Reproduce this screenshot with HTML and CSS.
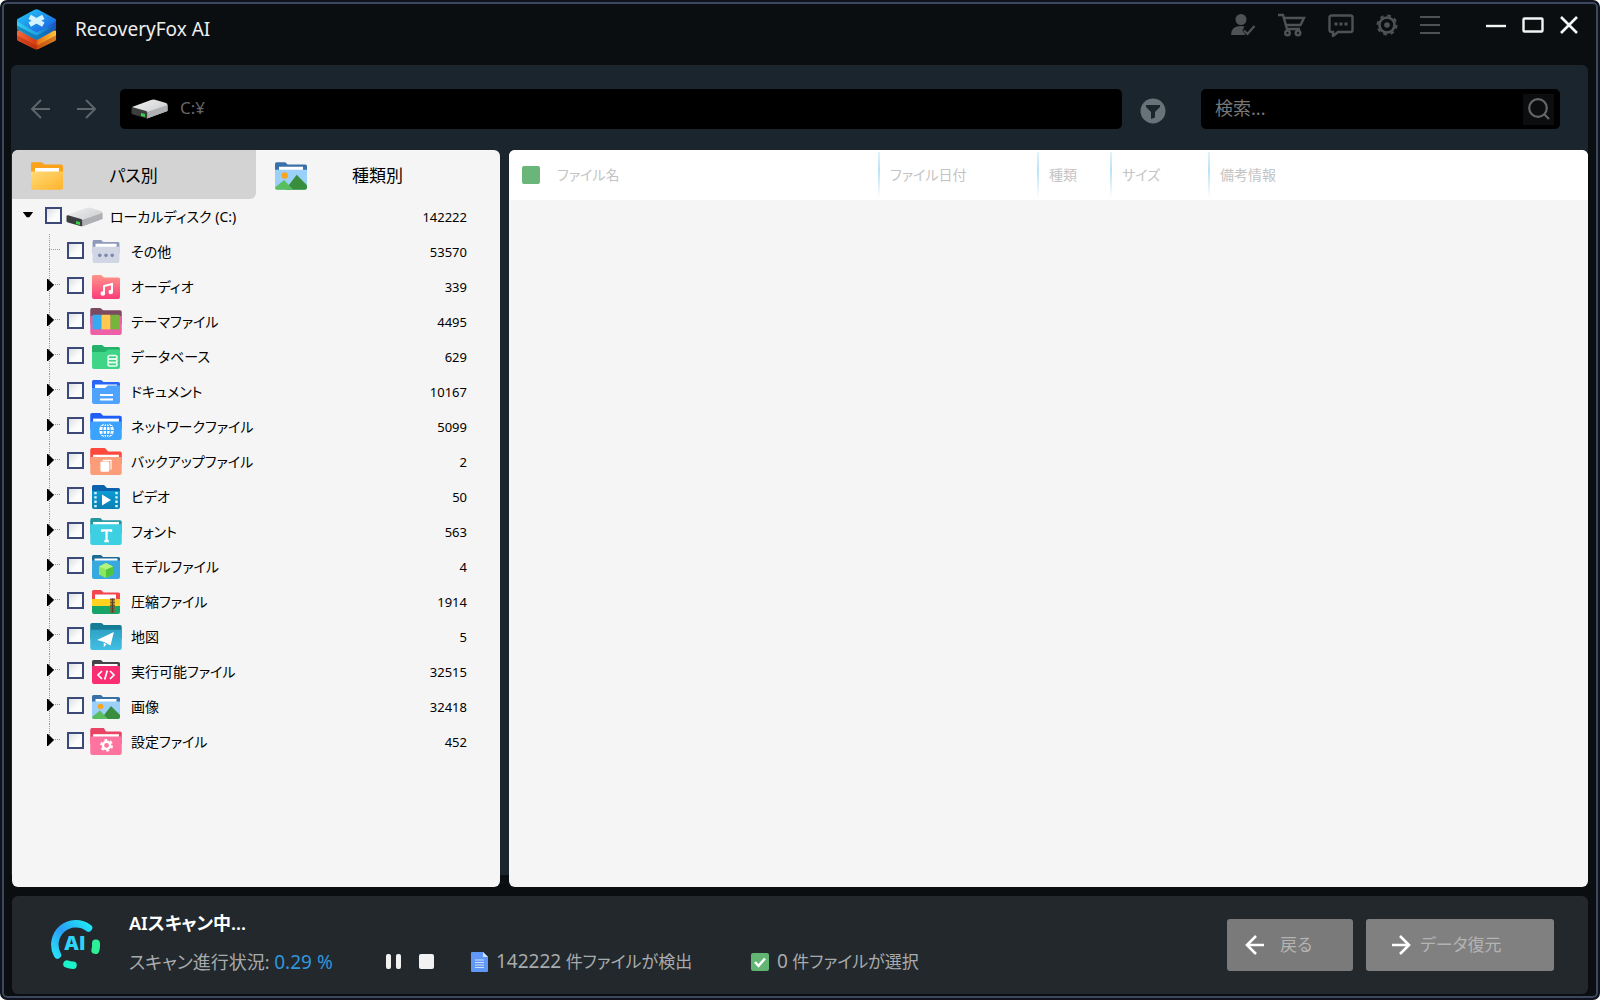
FILE: index.html
```html
<!DOCTYPE html>
<html lang="ja">
<head>
<meta charset="utf-8">
<meta name="viewport" content="width=device-width, initial-scale=1">
<title>RecoveryFox AI</title>
<link rel="stylesheet" href="styles.css">
</head>
<body>
<svg class="defs" aria-hidden="true">
  <defs>
    <linearGradient id="g-drive" x1="0" y1="0" x2="1" y2="1"><stop offset="0" stop-color="#f2f2f2"/><stop offset="1" stop-color="#c2c4c6"/></linearGradient>
    <linearGradient id="g-folder" x1="0" y1="0" x2="1" y2="1"><stop offset="0" stop-color="#ffdb78"/><stop offset="1" stop-color="#ffb32c"/></linearGradient>
    <linearGradient id="g-audio" x1="0" y1="0" x2="0" y2="1"><stop offset="0" stop-color="#ff9489"/><stop offset="1" stop-color="#fb3c7a"/></linearGradient>
    <linearGradient id="g-video" x1="0" y1="0" x2="0" y2="1"><stop offset="0" stop-color="#0c9bd6"/><stop offset="1" stop-color="#0a7fb3"/></linearGradient>
    <linearGradient id="g-map" x1="0" y1="0" x2="0" y2="1"><stop offset="0" stop-color="#2fa3c6"/><stop offset="1" stop-color="#42bfe3"/></linearGradient>
    <linearGradient id="g-blue" x1="0" y1="0" x2="1" y2="1"><stop offset="0" stop-color="#22d0f8"/><stop offset="1" stop-color="#1b55e0"/></linearGradient>
    <linearGradient id="g-side" x1="0" y1="0" x2="1" y2="0"><stop offset="0" stop-color="#35d0ee"/><stop offset=".5" stop-color="#1da4dc"/><stop offset="1" stop-color="#1c50c8"/></linearGradient>
    <linearGradient id="g-base" x1="0" y1="0" x2="1" y2="0"><stop offset="0" stop-color="#f4693c"/><stop offset=".48" stop-color="#d83c12"/><stop offset=".55" stop-color="#e87a18"/><stop offset="1" stop-color="#fcc53a"/></linearGradient>
    <linearGradient id="g-ring" x1="0" y1="1" x2="1" y2="0"><stop offset="0" stop-color="#27e0f8"/><stop offset=".5" stop-color="#2a9df8"/><stop offset="1" stop-color="#20e6f5"/></linearGradient>
  </defs>
  <symbol id="drive" viewBox="0 0 37 20">
    <path d="M1 8 20 1q2-.7 4-.3L35 4q1.500.5 1.500 2v6L16 19.500z" fill="url(#g-drive)"/>
    <path d="M16 13 36.500 6v6L16 19.500z" fill="#aeb0b3"/>
    <path d="M.5 9q.2-1 1.500-.8L15 12q1.200.4 1.200 1.700v4.800q0 1-1.200.8L2 15.500Q.5 15 .5 14z" fill="#3b3d3f"/>
    <path d="m10 14 4 1v3l-4-1z" fill="#35d24a"/>
  </symbol>
  <symbol id="folder" viewBox="0 0 28 24">
    <path d="M0 1.500Q0 0 1.500 0H9l3 2h14.500Q28 2 28 4v10H0z" fill="#f9a21a"/>
    <path d="M3.500 5h21v5h-21z" fill="#fff"/>
    <path d="M0 8h28v14q0 2-2 2H2q-2 0-2-2z" fill="url(#g-folder)"/>
  </symbol>
  <symbol id="image" viewBox="0 0 28 24">
    <path d="M0 1.500Q0 0 1.500 0H9l2 2h15.500Q28 2 28 3.500V14H0z" fill="#3a70a8"/>
    <path d="M3.500 4h21v4h-21z" fill="#fff"/>
    <path d="M0 6.500h28V22q0 2-2 2H2q-2 0-2-2z" fill="#9bd0fa"/>
    <circle cx="8.500" cy="11.500" r="2.800" fill="#faa51e"/>
    <path d="m9 24 10-13 9 9v2q0 2-2 2z" fill="#388e3c"/>
    <path d="m0 22 8-6.500 8 8.500H2q-2 0-2-2z" fill="#59be60"/>
  </symbol>
  <symbol id="other" viewBox="0 0 28 24">
    <path d="M0 1.500Q0 0 1.500 0H9l2 2h15.500Q28 2 28 3.500V14H0z" fill="#8e9ab9"/>
    <path d="M3 4h22v4H3z" fill="#fff"/>
    <path d="M0 7h28v15q0 2-2 2H2q-2 0-2-2z" fill="#d0d6e4"/>
    <g fill="#7f89ad"><circle cx="7.500" cy="16" r="1.900"/><circle cx="14" cy="16" r="1.900"/><circle cx="20.500" cy="16" r="1.900"/></g>
  </symbol>
  <symbol id="audio" viewBox="0 0 28 24">
    <path d="M0 1.500Q0 0 1.500 0H9l3 2.500h14.500Q28 2.500 28 4v18q0 2-2 2H2q-2 0-2-2z" fill="url(#g-audio)"/>
    <path d="M12 18.500V11l8-2v8" fill="none" stroke="#fff" stroke-width="2"/>
    <circle cx="10.800" cy="18.500" r="2.300" fill="#fff"/><circle cx="18.800" cy="17" r="2.300" fill="#fff"/>
  </symbol>
  <symbol id="theme" viewBox="0 0 28 24">
    <path d="M0 1.500Q0 0 1.500 0H9l2.500 2h15Q28 2 28 4v10H0z" fill="#7c4a60"/>
    <path d="M0 7h28v15q0 2-2 2H2q-2 0-2-2z" fill="#ee5fa7"/>
    <path d="M2 6h8v13H2z" fill="#36aaf0"/><path d="M10 6h8v13h-8z" fill="#ffc94f"/><path d="M18 6h8v13h-8z" fill="#76b43c"/>
  </symbol>
  <symbol id="database" viewBox="0 0 28 24">
    <path d="M0 1.500Q0 0 1.500 0H10l2.500 2h14Q28 2 28 4v10H0z" fill="#24b26b"/>
    <path d="M0 7h13l3-2.500h12V22q0 2-2 2H2q-2 0-2-2z" fill="#3fd587"/>
    <g fill="none" stroke="#e9fff3" stroke-width="1.600"><rect x="16" y="10.500" width="9" height="3.500" rx="1.700"/><rect x="16" y="14" width="9" height="3.500" rx="1.700"/><rect x="16" y="17.500" width="9" height="3.500" rx="1.700"/></g>
  </symbol>
  <symbol id="document" viewBox="0 0 28 24">
    <path d="M0 1.500Q0 0 1.500 0H9l2.500 2h15Q28 2 28 4v10H0z" fill="#2a66f6"/>
    <path d="M3 4.500h22V9H3z" fill="#fff"/>
    <path d="M0 8h13l3-2.500h12V22q0 2-2 2H2q-2 0-2-2z" fill="#4ea3ff"/>
    <path d="M8 15h13M8 19.500h13" stroke="#fff" stroke-width="1.800"/>
  </symbol>
  <symbol id="network" viewBox="0 0 28 24">
    <path d="M0 1.500Q0 0 1.500 0H9l2.500 2.500h15Q28 2.500 28 4v10H0z" fill="#1f5df4"/>
    <path d="M2.500 5h23v4h-23z" fill="#fff"/>
    <path d="M0 7.500h28V22q0 2-2 2H2q-2 0-2-2z" fill="#3ba3fd"/>
    <circle cx="14.500" cy="15.500" r="6.500" fill="#fff"/>
    <path d="M8 15.500h13M14.500 9v13M9.500 12h10M9.500 19h10" stroke="#3ba3fd"/>
    <ellipse cx="14.500" cy="15.500" rx="3.300" ry="6.500" fill="none" stroke="#3ba3fd"/>
  </symbol>
  <symbol id="backup" viewBox="0 0 28 24">
    <path d="M0 1.500Q0 0 1.500 0H13l3 3h10.500Q28 3 28 5v9H0z" fill="#ff493c"/>
    <path d="M2.500 6h23v4h-23z" fill="#fff"/>
    <path d="M0 8h28v14q0 2-2 2H2q-2 0-2-2z" fill="#fb9d78"/>
    <rect x="9" y="12" width="8" height="9" rx="1" fill="#fff"/><path d="M11 11h7.500v8" fill="none" stroke="#fff"/>
  </symbol>
  <symbol id="video" viewBox="0 0 28 24">
    <path d="M0 1.500Q0 0 1.500 0H12l3 3h11.500Q28 3 28 5v9H0z" fill="#0c62ad"/>
    <path d="M0 6h28v16q0 2-2 2H2q-2 0-2-2z" fill="url(#g-video)"/>
    <path d="M3.500 7v16M24.500 7v16" stroke="#dff5ff" stroke-width="2.400" stroke-dasharray="2.300 2"/>
    <path d="m10 9.500 9 5.500-9 5.500z" fill="#fff"/>
  </symbol>
  <symbol id="font" viewBox="0 0 28 24">
    <path d="M0 1.500Q0 0 1.500 0H9l2 2h15.500Q28 2 28 3.500V14H0z" fill="#23969e"/>
    <path d="M2.500 3.500h23V7h-23z" fill="#fff"/>
    <path d="M0 5.500h28V22q0 2-2 2H2q-2 0-2-2z" fill="#3dcfe2"/>
    <path d="M10.500 12.500V11h8v1.500M14.500 11v10M12.500 20.500h4" fill="none" stroke="#fff" stroke-width="2"/>
  </symbol>
  <symbol id="model" viewBox="0 0 28 24">
    <path d="M0 1.500Q0 0 1.500 0H9l2 2h15.500Q28 2 28 3.500V14H0z" fill="#1c6b93"/>
    <path d="M2.500 3.500h23V7h-23z" fill="#fff"/>
    <path d="M0 5.500h28V22q0 2-2 2H2q-2 0-2-2z" fill="#38a9df"/>
    <path d="m14 8 7 3.500v8L14 23l-7-3.500v-8z" fill="#8ce85a"/><path d="m14 14.500 7-3v8L14 23z" fill="#4fc53f"/><path d="m14 8 7 3.500-7 3-7-3z" fill="#b4f57e"/>
  </symbol>
  <symbol id="archive" viewBox="0 0 28 24">
    <path d="M0 1.500Q0 0 1.500 0H9l2.500 2.500h15Q28 2.500 28 4v6H0z" fill="#f3454f"/>
    <path d="M3 4.500h21V9H3z" fill="#fff"/>
    <path d="M0 9h28v7H0z" fill="#ffd21f"/><path d="M0 16h28v6q0 2-2 2H2q-2 0-2-2z" fill="#16a566"/>
    <path d="M20.500 8.500v14" stroke="#8a5a33" stroke-width="5" stroke-dasharray="2 1"/>
    <path d="M20.500 8.500v14" stroke="#55402c" stroke-width="1.500"/>
  </symbol>
  <symbol id="map" viewBox="0 0 28 24">
    <path d="M0 1.500Q0 0 1.500 0H10l2 1.800h14.500Q28 2 28 3.500V14H0z" fill="#157c97"/>
    <path d="M0 6h28v16q0 2-2 2H2q-2 0-2-2z" fill="url(#g-map)"/>
    <path d="m6 15 15-7-3 12-5-3zM12 17.500v4l2.500-2.700z" fill="#fff"/>
  </symbol>
  <symbol id="exe" viewBox="0 0 28 24">
    <path d="M0 1.500Q0 0 1.500 0H9l2 2h15.500Q28 2 28 3.500V14H0z" fill="#46444b"/>
    <path d="M2.500 4h23v4h-23z" fill="#fff"/>
    <path d="M0 6h28v16q0 2-2 2H2q-2 0-2-2z" fill="#fb2d72"/>
    <path d="m10 11-4 4 4 4M18 11l4 4-4 4M15.300 10.500l-2.600 9" fill="none" stroke="#fff" stroke-width="1.700"/>
  </symbol>
  <symbol id="config" viewBox="0 0 28 24">
    <path d="M0 1.500Q0 0 1.500 0H12l2 3h12.500Q28 3 28 4.500V14H0z" fill="#ea4465"/>
    <path d="M2.500 5.500h23V9h-23z" fill="#fff"/>
    <path d="M0 7.500h28V22q0 2-2 2H2q-2 0-2-2z" fill="#ff739f"/>
    <circle cx="14.500" cy="15.500" r="3.200" fill="none" stroke="#fff" stroke-width="2.200"/>
    <circle cx="14.500" cy="15.500" r="4.800" fill="none" stroke="#fff" stroke-width="1.800" stroke-dasharray="2.500 2.526"/>
  </symbol>
  <symbol id="open" viewBox="0 0 12 7"><path d="M0 0h12L7.500 6h-3z" fill="#000"/></symbol>
  <symbol id="closed" viewBox="0 0 7 12"><path d="M0 0h1l6 6-6 6H0z" fill="#000"/></symbol>
</svg>

<div class="window">
  <header class="titlebar">
    <svg class="logo" viewBox="0 0 42 42" aria-hidden="true">
      <path d="M1 22v9q0 1 1 1.500l17 8.500q2 1 4 0l17-8.500q1-.5 1-1.500v-9z" fill="url(#g-base)"/>
      <path d="M1 27l18 9.500q2 1 4 0L41 27v4.500L23 41q-2 1-4 0L1 31.500z" fill="#a82408" opacity=".45"/>
      <path d="M1 11v9q0 1 1 1.500L19 31q2 1 4 0l17-9.500q1-.5 1-1.500v-9z" fill="url(#g-side)"/>
      <path d="M1 17l18 9.500q2 1 4 0L41 17v3.500L23 31q-2 1-4 0L1 20.500z" fill="#0e62a8" opacity=".6"/>
      <path d="M19 .8q2-1 4 0L40 10q2 1.500 0 3L23 23q-2 1-4 0L2 13q-2-1.500 0-3z" fill="url(#g-blue)"/>
      <path d="m14 8 14 8M28 8l-14 8" stroke="#d5f2ff" stroke-width="5"/>
    </svg>
    <h1 class="app-name">RecoveryFox AI</h1>
    <nav class="tools" aria-label="ツール">
      <button type="button" aria-label="アカウント"><svg width="26" height="24" viewBox="0 0 26 24"><circle cx="11" cy="6.500" r="5.500" fill="currentColor"/><path d="M1 22q0-9 10-9 2 0 3.500.5l-2 4 3 4.500z" fill="currentColor"/><path d="m14 17.500 3.500 3.500 7-8" fill="none" stroke="currentColor" stroke-width="2.200"/></svg></button>
      <button type="button" aria-label="購入"><svg width="28" height="24" viewBox="0 0 28 24" fill="none" stroke="currentColor" stroke-width="2.400"><path d="M0 2h5l4 14h13M5.500 5H26l-3.500 7H8"/><circle cx="9.500" cy="20" r="2.300"/><circle cx="20" cy="20" r="2.300"/></svg></button>
      <button type="button" aria-label="お問い合わせ"><svg width="26" height="24" viewBox="0 0 26 24" fill="none" stroke="currentColor" stroke-width="2.400"><path d="M3.500 2.500h19q2 0 2 2V17q0 2-2 2H10l-5 4v-4H3.500q-2 0-2-2V4.500q0-2 2-2z"/><path d="M6.500 11h13" stroke-width="3" stroke-dasharray="3 2"/></svg></button>
      <button type="button" aria-label="設定"><svg width="22" height="22" viewBox="0 0 22 22" fill="none" stroke="currentColor"><circle cx="11" cy="11" r="7.500" stroke-width="2.600"/><circle cx="11" cy="11" r="9.500" stroke-width="2" stroke-dasharray="3.600 3.862"/><circle cx="11" cy="11" r="2.800" fill="currentColor" stroke="none"/></svg></button>
      <button type="button" aria-label="メニュー"><svg width="20" height="20" viewBox="0 0 20 20" fill="none" stroke="currentColor" stroke-width="2"><path d="M0 2h20M0 10h20M0 18h20"/></svg></button>
    </nav>
    <div class="controls">
      <button type="button" aria-label="最小化"><svg width="20" height="20" viewBox="0 0 20 20" stroke="currentColor" stroke-width="2.400"><path d="M0 11h20"/></svg></button>
      <button type="button" aria-label="最大化"><svg width="22" height="18" viewBox="0 0 22 18" fill="none" stroke="currentColor" stroke-width="2.400"><rect x="1.500" y="2.500" width="19" height="13" rx="1"/></svg></button>
      <button type="button" aria-label="閉じる"><svg width="18" height="18" viewBox="0 0 18 18" stroke="currentColor" stroke-width="2.600"><path d="m1 1 16 16M17 1 1 17"/></svg></button>
    </div>
  </header>

  <main class="workspace">
    <div class="toolbar">
      <div class="history">
        <button type="button" aria-label="戻る"><svg width="20" height="20" viewBox="0 0 20 20" fill="none" stroke="currentColor" stroke-width="2"><path d="M20 10H2M11 1l-9 9 9 9"/></svg></button>
        <button type="button" aria-label="進む"><svg width="20" height="20" viewBox="0 0 20 20" fill="none" stroke="currentColor" stroke-width="2"><path d="M0 10h18M9 1l9 9-9 9"/></svg></button>
      </div>
      <label class="path"><svg width="37" height="20" aria-hidden="true"><use href="#drive"/></svg><input type="text" value="C:¥" aria-label="パス"></label>
      <button class="filter" type="button" aria-label="フィルター"><svg width="26" height="26" viewBox="0 0 26 26"><circle cx="13" cy="13" r="12.500" fill="#687279"/><path d="M6 7h14v2l-5 5v5.500L11 21v-7L6 9z" fill="#1a252d"/></svg></button>
      <form class="search">
        <input type="text" placeholder="検索..." aria-label="検索">
        <button type="button" aria-label="検索"><svg width="22" height="22" viewBox="0 0 22 22" fill="none" stroke="currentColor" stroke-width="2.200"><circle cx="10" cy="10" r="8.800"/><path d="m16 16 5 5"/></svg></button>
      </form>
    </div>

    <div class="panes">
      <section class="sidebar">
        <div class="tabs">
          <button class="tab" type="button"><svg width="32" height="28"><use href="#folder"/></svg><span>パス別</span></button>
          <button class="tab active" type="button"><svg width="32" height="28"><use href="#image"/></svg><span>種類別</span></button>
        </div>
        <ul class="tree">
          <li>
            <div class="row root"><span class="twist"><svg width="12" height="6"><use href="#open"/></svg></span><label><input type="checkbox"><svg class="disk" width="37" height="20"><use href="#drive"/></svg><span class="name">ローカルディスク (C:)</span></label><span class="count">142222</span></div>
            <ul>
              <li class="row"><span class="branch"></span><label><input type="checkbox"><span class="icon"><svg width="28" height="23"><use href="#other"/></svg></span><span class="name">その他</span></label><span class="count">53570</span></li>
              <li class="row"><span class="branch"><svg width="7" height="12"><use href="#closed"/></svg></span><label><input type="checkbox"><span class="icon"><svg width="28" height="24"><use href="#audio"/></svg></span><span class="name">オーディオ</span></label><span class="count">339</span></li>
              <li class="row"><span class="branch"><svg width="7" height="12"><use href="#closed"/></svg></span><label><input type="checkbox"><span class="icon"><svg width="32" height="27"><use href="#theme"/></svg></span><span class="name">テーマファイル</span></label><span class="count">4495</span></li>
              <li class="row"><span class="branch"><svg width="7" height="12"><use href="#closed"/></svg></span><label><input type="checkbox"><span class="icon"><svg width="28" height="24"><use href="#database"/></svg></span><span class="name">データベース</span></label><span class="count">629</span></li>
              <li class="row"><span class="branch"><svg width="7" height="12"><use href="#closed"/></svg></span><label><input type="checkbox"><span class="icon"><svg width="28" height="24"><use href="#document"/></svg></span><span class="name">ドキュメント</span></label><span class="count">10167</span></li>
              <li class="row"><span class="branch"><svg width="7" height="12"><use href="#closed"/></svg></span><label><input type="checkbox"><span class="icon"><svg width="32" height="27"><use href="#network"/></svg></span><span class="name">ネットワークファイル</span></label><span class="count">5099</span></li>
              <li class="row"><span class="branch"><svg width="7" height="12"><use href="#closed"/></svg></span><label><input type="checkbox"><span class="icon"><svg width="32" height="27"><use href="#backup"/></svg></span><span class="name">バックアップファイル</span></label><span class="count">2</span></li>
              <li class="row"><span class="branch"><svg width="7" height="12"><use href="#closed"/></svg></span><label><input type="checkbox"><span class="icon"><svg width="28" height="24"><use href="#video"/></svg></span><span class="name">ビデオ</span></label><span class="count">50</span></li>
              <li class="row"><span class="branch"><svg width="7" height="12"><use href="#closed"/></svg></span><label><input type="checkbox"><span class="icon"><svg width="32" height="27"><use href="#font"/></svg></span><span class="name">フォント</span></label><span class="count">563</span></li>
              <li class="row"><span class="branch"><svg width="7" height="12"><use href="#closed"/></svg></span><label><input type="checkbox"><span class="icon"><svg width="28" height="24"><use href="#model"/></svg></span><span class="name">モデルファイル</span></label><span class="count">4</span></li>
              <li class="row"><span class="branch"><svg width="7" height="12"><use href="#closed"/></svg></span><label><input type="checkbox"><span class="icon"><svg width="28" height="24"><use href="#archive"/></svg></span><span class="name">圧縮ファイル</span></label><span class="count">1914</span></li>
              <li class="row"><span class="branch"><svg width="7" height="12"><use href="#closed"/></svg></span><label><input type="checkbox"><span class="icon"><svg width="32" height="27"><use href="#map"/></svg></span><span class="name">地図</span></label><span class="count">5</span></li>
              <li class="row"><span class="branch"><svg width="7" height="12"><use href="#closed"/></svg></span><label><input type="checkbox"><span class="icon"><svg width="28" height="24"><use href="#exe"/></svg></span><span class="name">実行可能ファイル</span></label><span class="count">32515</span></li>
              <li class="row"><span class="branch"><svg width="7" height="12"><use href="#closed"/></svg></span><label><input type="checkbox"><span class="icon"><svg width="28" height="24"><use href="#image"/></svg></span><span class="name">画像</span></label><span class="count">32418</span></li>
              <li class="row"><span class="branch"><svg width="7" height="12"><use href="#closed"/></svg></span><label><input type="checkbox"><span class="icon"><svg width="32" height="27"><use href="#config"/></svg></span><span class="name">設定ファイル</span></label><span class="count">452</span></li>
            </ul>
          </li>
        </ul>
      </section>

      <section class="files">
        <table>
          <colgroup><col class="c-name"><col class="c-date"><col class="c-type"><col class="c-size"><col></colgroup>
          <thead>
            <tr><th><label><input type="checkbox" class="all">ファイル名</label></th><th>ファイル日付</th><th>種類</th><th>サイズ</th><th>備考情報</th></tr>
          </thead>
        </table>
      </section>
    </div>
  </main>

  <footer class="status">
    <svg class="ai" viewBox="0 0 50 50" aria-hidden="true">
      <path d="M7.500 36A21 21 0 0 1 38.500 9" fill="none" stroke="url(#g-ring)" stroke-width="7.500" stroke-linecap="round"/>
      <path d="M46 24.500q.3 3-.6 6.500" fill="none" stroke="#2bf098" stroke-width="8" stroke-linecap="round"/>
      <path d="M17 45q3 1 6 1.200" fill="none" stroke="#1bf3c8" stroke-width="7.500" stroke-linecap="round"/>
      <text x="25" y="31" text-anchor="middle" class="ai-text">AI</text>
    </svg>
    <div class="scan">
      <p class="scan-title">AIスキャン中...</p>
      <div class="scan-line">
        <p class="progress">スキャン進行状況: <b>0.29 %</b></p>
        <button type="button" aria-label="一時停止"><svg width="16" height="15" viewBox="0 0 16 15" fill="currentColor"><rect width="5" height="15" rx="2"/><rect x="10" width="5" height="15" rx="2"/></svg></button>
        <button type="button" aria-label="停止"><svg width="15" height="15" viewBox="0 0 15 15" fill="currentColor"><rect width="15" height="15" rx="2"/></svg></button>
        <div class="found"><svg width="17" height="20" viewBox="0 0 17 20"><path d="M0 1q0-1 1-1h11l5 5v14q0 1-1 1H1q-1 0-1-1z" fill="#6197f5"/><path d="m12 0 5 5h-5z" fill="#d3e3ff"/><path d="M4 8h9M4 10.500h9M4 13h9M4 15.500h9" stroke="#cfe0ff" stroke-width="1.200"/></svg><p><b>142222</b> 件ファイルが検出</p></div>
        <div class="chosen"><svg width="18" height="18" viewBox="0 0 18 18"><rect width="18" height="18" rx="2" fill="#62b573"/><path d="m4 9 3.500 3.800L14 5.500" fill="none" stroke="#fff" stroke-width="2.500"/></svg><p><b>0</b> 件ファイルが選択</p></div>
      </div>
    </div>
    <div class="actions">
      <button class="back" type="button"><svg width="20" height="20" viewBox="0 0 20 20" fill="none" stroke="#fff" stroke-width="2.600"><path d="M19 10H2M11 1l-9 9 9 9"/></svg>戻る</button>
      <button class="recover" type="button"><svg width="20" height="20" viewBox="0 0 20 20" fill="none" stroke="#fff" stroke-width="2.600"><path d="M1 10h17M9 1l9 9-9 9"/></svg>データ復元</button>
    </div>
  </footer>
</div>
</body>
</html>
```
FILE: styles.css
```css
* { box-sizing: border-box; margin: 0; padding: 0; }

body {
  background: #fff;
  color: #000;
  font: 14px/20px "Noto Sans", "Noto Sans CJK JP", sans-serif;
  font-feature-settings: "palt";
}

button, input { font: inherit; color: inherit; background: none; border: 0; outline: 0; font-feature-settings: inherit; }
button { display: flex; align-items: center; }
ul { list-style: none; }
svg { display: block; flex: none; }
.defs { position: absolute; width: 0; height: 0; }

.window {
  display: flex;
  flex-direction: column;
  min-height: 100vh;
  padding: 0 10px 4px 9px;
  background: #0b0e10;
  border: 2px solid #10131c;
  border-radius: 7px;
  box-shadow: inset 0 0 0 2px #3c4860;
}

/* title bar */
.titlebar { display: flex; align-items: flex-start; height: 63px; padding: 7px 10px 0 5px; }
.logo { width: 41px; height: 41px; }
.app-name { margin: 6px auto 0 18px; color: #eee; font-size: 19px; font-weight: 400; line-height: 28px; }
.tools, .controls { display: flex; align-items: center; height: 32px; }
.tools { gap: 22px; margin-right: 46px; color: #4f5254; }
.controls { gap: 16px; color: #f4f4f4; }

/* workspace */
.workspace {
  display: flex;
  flex: 1;
  flex-direction: column;
  background: linear-gradient(#0b0e10, #0b0e10) bottom / 100% 12px no-repeat #1a252d;
  border-radius: 6px 6px 0 0;
}
.toolbar { display: flex; align-items: center; height: 85px; padding: 3px 28px 0 19px; }
.history { display: flex; gap: 27px; margin-right: 23px; color: #5c666b; }
.path { display: flex; flex: 1; align-items: center; gap: 12px; height: 40px; padding: 0 12px 0 11px; border-radius: 5px; background: #000; }
.path input { flex: 1; min-width: 0; padding-bottom: 3px; color: #666; font-size: 17px; }
.filter { margin: 4px 35px 0 18px; }
.search { display: flex; align-items: center; width: 359px; height: 40px; padding: 0 6px 0 14px; border-radius: 5px; background: #000; }
.search input { flex: 1; min-width: 0; padding-bottom: 3px; font-size: 18px; }
.search input::placeholder { color: #777; }
.search button { justify-content: center; width: 31px; height: 31px; background: #0b0d0e; color: #666; }

.panes { display: flex; flex: 1; gap: 9px; padding: 0 0 0 1px; }
.sidebar, .files { overflow: hidden; border-radius: 6px; background: #f5f5f5; }
.sidebar { width: 488px; }
.files { flex: 1; }

.tabs { display: flex; }
.tab { flex: 1; height: 49px; padding: 3px 0 0 19px; font-size: 17px; }
.tab span { flex: 1; padding-right: 52px; text-align: center; }
.tab:not(.active) { background: #d3d3d3; border-radius: 6px 0 6px 0; }

/* category tree */
.row { display: flex; align-items: center; height: 35px; padding: 0 33px 0 35px; }
.row.root { padding-left: 10px; }
.row label { display: flex; flex: 1; align-items: center; }
.row input {
  appearance: none;
  flex: none;
  width: 17px;
  height: 17px;
  margin: 0 6px 3px 0;
  border: 2px solid #3c4878;
  background: linear-gradient(135deg, #dcdfe2, #fcfcfc 60%);
}
.root input { margin-right: 4px; }
.disk { margin-right: 7px; }
.icon { display: flex; justify-content: center; width: 32px; margin-right: 9px; }
.count { font-size: 13px; }
.twist { width: 23px; padding-bottom: 4px; }
.branch {
  display: flex;
  align-items: center;
  align-self: stretch;
  width: 20px;
  padding-bottom: 4px;
  background:
    repeating-linear-gradient(#999 0 1px, transparent 1px 2px) 2px 0 / 1px 100% no-repeat,
    repeating-linear-gradient(90deg, #999 0 1px, transparent 1px 2px) 2px 15px / 12px 1px no-repeat;
}
.row:last-child .branch { background-size: 1px 16px, 12px 1px; }

/* file list */
table { width: 100%; table-layout: fixed; border-collapse: collapse; }
.c-name { width: 369px; }
.c-date { width: 159px; }
.c-type { width: 73px; }
.c-size { width: 98px; }
th {
  height: 50px;
  padding-left: 12px;
  background: linear-gradient(#e2f3fb, #b9e2f6 40%, #fff) 0 2px / 2px 46px no-repeat #fff;
  color: #c4c4c4;
  font-weight: 400;
  text-align: left;
}
th:first-child { padding-left: 13px; background: #fff; }
th label { display: flex; align-items: center; gap: 17px; }
.all { appearance: none; width: 18px; height: 18px; border-radius: 2px; background: #6ab578; }

/* status bar */
.status {
  display: flex;
  height: 98px;
  margin: 9px 0 0 1px;
  padding: 0 34px 0 38px;
  border-radius: 6px;
  background: #22282c;
}
.ai { width: 50px; height: 50px; margin: 23px 29px 0 0; }
.ai-text { fill: #2fd3f8; font: 800 20px "Open Sans", sans-serif; }
.scan { flex: 1; padding-top: 14px; color: #a8abad; font-size: 18px; line-height: 26px; white-space: nowrap; }
.scan b { font-size: 19px; font-weight: 400; }
.scan-title { color: #fff; font-weight: 600; }
.scan-line { display: flex; align-items: center; margin-top: 12px; }
.scan-line button { color: #f2f2f2; }
.progress { width: 257px; }
.progress b { color: #3196dc; }
.scan-line button + button { margin-left: 17px; }
.found, .chosen { display: flex; align-items: center; gap: 8px; font-size: 17px; }
.found { width: 280px; margin-left: 37px; }
.actions { display: flex; gap: 13px; margin-top: 23px; }
.actions button { gap: 15px; height: 52px; border-radius: 3px; background: #808080; color: #b4b4b4; font-size: 17px; }
.actions .back { width: 126px; padding-left: 18px; background: #7a7a7a; }
.actions .recover { width: 188px; gap: 9px; padding-left: 25px; }
```
